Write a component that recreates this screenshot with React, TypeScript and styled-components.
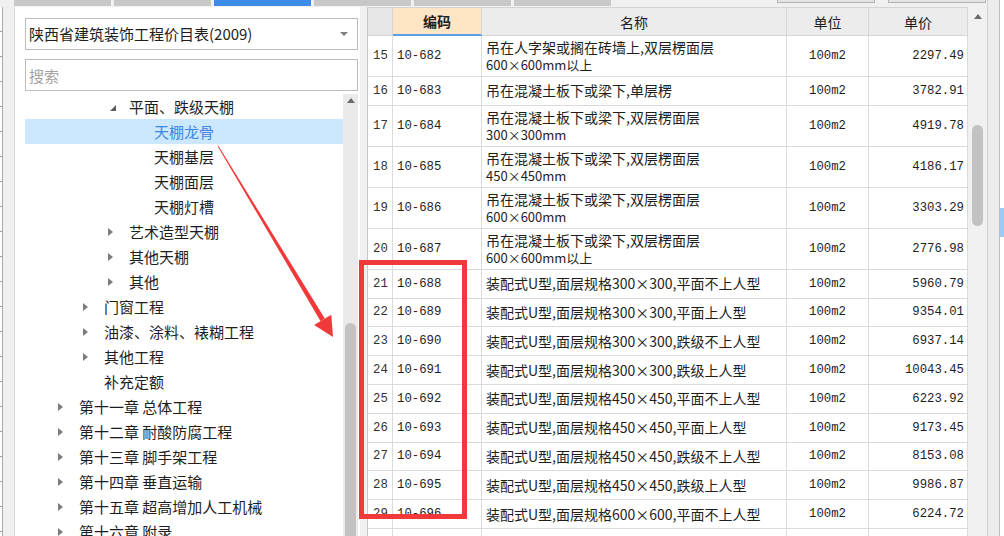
import React from "react";
import styled, { createGlobalStyle } from "styled-components";

const Global = createGlobalStyle`
  html, body { margin: 0; padding: 0; background: #f0f0f0; }
  body { font-family: "Noto Sans CJK SC", "Noto Sans", sans-serif; color: #1e1e1e; }
  * { box-sizing: border-box; }
`;

const Screen = styled.div`
  position: relative;
  width: 1004px;
  height: 536px;
  overflow: hidden;
  background: #f0f0f0;
  display: flex;
  flex-direction: column;
`;

const TopStrip = styled.div`
  flex: none;
  height: 7px;
  display: flex;
  align-items: flex-start;
`;

const Tabs = styled.div`
  display: flex;
  gap: 3px;
  margin-left: 14px;
`;

const Tab = styled.div<{ $active?: boolean }>`
  width: 97px;
  height: 6px;
  background: ${(p) => (p.$active ? "#3b8de8" : "#c8c8c8")};
`;

const ButtonStubs = styled.div`
  display: flex;
  gap: 13px;
  margin-left: 166px;
`;

const ButtonStub = styled.div`
  width: 98px;
  height: 3px;
  background: #e3e3e3;
  border: 1px solid #b2b2b2;
  border-top: none;
`;

const Main = styled.div`
  flex: 1;
  min-height: 0;
  display: flex;
  align-items: stretch;
`;

const LeftEdge = styled.div`
  width: 14px;
  flex: none;
  display: flex;
`;

const EdgeStrip = styled.div`
  width: 3px;
  background: repeating-linear-gradient(
    to bottom,
    #ffffff 0px,
    #ffffff 24px,
    #9a9a9a 24px,
    #9a9a9a 25px
  );
  border-right: 1px solid #a8a8a8;
`;

const Panel = styled.div`
  width: 346px;
  flex: none;
  background: #ffffff;
  border-left: 1px solid #d6d6d6;
  display: flex;
  flex-direction: column;
  padding: 11px 2px 0 10px;
`;

const Select = styled.div`
  height: 32px;
  flex: none;
  border: 1px solid #bcbcbc;
  display: flex;
  align-items: center;
  justify-content: space-between;
  padding: 0 9px 0 3px;
  font-size: 15px;
  line-height: 20px;
  color: #1e1e1e;
`;

const SelectArrow = styled.span`
  width: 0;
  height: 0;
  border-top: 4px solid #808080;
  border-left: 4px solid transparent;
  border-right: 4px solid transparent;
`;

const Search = styled.div`
  height: 32px;
  flex: none;
  margin-top: 9px;
  border: 1px solid #bcbcbc;
  display: flex;
  align-items: center;
  padding-left: 3px;
  font-size: 15px;
  color: #a3a3a3;
`;

const TreeWrap = styled.div`
  flex: 1;
  min-height: 0;
  margin-top: 3px;
  display: flex;
  overflow: hidden;
`;

const TreeList = styled.div`
  flex: 1;
  display: flex;
  flex-direction: column;
`;

const TreeRow = styled.div<{ $level: number; $selected?: boolean }>`
  height: 25px;
  flex: none;
  display: flex;
  align-items: center;
  padding-left: ${(p) => 33 + p.$level * 25}px;
  font-size: 15px;
  line-height: 25px;
  white-space: nowrap;
  background: ${(p) => (p.$selected ? "#cce8ff" : "transparent")};
  color: ${(p) => (p.$selected ? "#3a87df" : "#1e1e1e")};
`;

const CaretSlot = styled.span`
  width: 21px;
  flex: none;
  display: flex;
  align-items: center;
`;

const CaretClosed = styled.span`
  width: 0;
  height: 0;
  border-left: 5px solid #7c7c7c;
  border-top: 4px solid transparent;
  border-bottom: 4px solid transparent;
`;

const CaretOpen = styled.span`
  margin-left: 2px;
  margin-top: 2px;
  width: 0;
  height: 0;
  border-bottom: 6px solid #5a5a5a;
  border-left: 6px solid transparent;
`;

const VScroll = styled.div<{ $w: number; $bg: string }>`
  width: ${(p) => p.$w}px;
  flex: none;
  background: ${(p) => p.$bg};
  display: flex;
  flex-direction: column;
  align-items: center;
`;

const ScrollUp = styled.span<{ $top: number }>`
  margin-top: ${(p) => p.$top}px;
  flex: none;
  width: 0;
  height: 0;
  border-bottom: 5px solid #6a6a6a;
  border-left: 4px solid transparent;
  border-right: 4px solid transparent;
`;

const Thumb = styled.div<{ $top: number; $h: number }>`
  margin-top: ${(p) => p.$top}px;
  width: 11px;
  height: ${(p) => p.$h}px;
  border-radius: 6px;
  background: #c2c2c2;
  flex: none;
`;

const TableArea = styled.div`
  margin-left: 7px;
  display: flex;
  flex: none;
`;

const Grid = styled.div`
  width: 601px;
  border-left: 1px solid #c9c9c9;
  border-top: 1px solid #d4d4d4;
  display: flex;
  flex-direction: column;
`;

const cols = "25px 89px 305px 82px 99px";

const HeadRow = styled.div`
  display: grid;
  grid-template-columns: ${cols};
  height: 28px;
  flex: none;
`;

const HeadCell = styled.div<{ $active?: boolean; $corner?: boolean }>`
  display: flex;
  align-items: center;
  justify-content: center;
  font-size: 14px;
  color: #1e1e1e;
  font-weight: ${(p) => (p.$active ? 700 : 400)};
  background: ${(p) => (p.$active ? "#fde5c6" : p.$corner ? "#e6e6e6" : "#ececec")};
  border-right: 1px solid #d6d6d6;
  border-bottom: ${(p) => (p.$active ? "2px solid #5b9fe8" : "1px solid #d6d6d6")};
`;

const BodyRow = styled.div<{ $tall?: boolean }>`
  display: grid;
  grid-template-columns: ${cols};
  height: ${(p) => (p.$tall ? 41 : 28.8)}px;
  flex: none;
  background: #ffffff;
`;

const BaseCell = styled.div`
  display: flex;
  align-items: center;
  border-right: 1px solid #dadada;
  border-bottom: 1px solid #dadada;
  overflow: hidden;
  white-space: nowrap;
`;

const NumCell = styled(BaseCell)`
  padding-left: 5px;
  font-family: "Liberation Mono", "DejaVu Sans Mono", monospace;
  font-size: 12.3px;
  color: #333333;
`;

const CodeCell = styled(BaseCell)`
  padding-left: 4px;
  font-family: "Liberation Mono", "DejaVu Sans Mono", monospace;
  font-size: 12.3px;
  color: #1e1e1e;
`;

const NameCell = styled(BaseCell)`
  padding-left: 4px;
  flex-direction: column;
  align-items: flex-start;
  justify-content: center;
  font-size: 14px;
  line-height: 17px;
  color: #1e1e1e;
`;

const NameLine = styled.span<{ $sub?: boolean }>`
  display: block;
  height: 17px;
  font-size: ${(p) => (p.$sub ? 13 : 14)}px;
`;

const UnitCell = styled(BaseCell)`
  justify-content: center;
  font-family: "Liberation Mono", "DejaVu Sans Mono", monospace;
  font-size: 12.3px;
  color: #1e1e1e;
`;

const PriceCell = styled(BaseCell)`
  justify-content: flex-end;
  padding-right: 3px;
  font-family: "Liberation Mono", "DejaVu Sans Mono", monospace;
  font-size: 12.3px;
  color: #1e1e1e;
`;

const RightStrip = styled.div`
  flex: 1;
  display: flex;
  border-left: 1px solid #d2d2d2;
  margin-top: -7px;
`;

const RightGrey = styled.div`
  width: 12px;
  background: #ececec;
  border-right: 1px solid #bdbdbd;
`;

const RightPane = styled.div`
  flex: 1;
  background: #ffffff;
  display: flex;
  flex-direction: column;
`;

const RightBand = styled.div`
  margin-top: 208px;
  height: 29px;
  background: #9ec9f2;
`;

const Overlay = styled.svg`
  position: absolute;
  left: 0;
  top: 0;
  pointer-events: none;
`;

type TreeItem = { label: string; level: number; caret?: "open" | "closed"; selected?: boolean };

const tree: TreeItem[] = [
  { label: "平面、跌级天棚", level: 2, caret: "open" },
  { label: "天棚龙骨", level: 3, selected: true },
  { label: "天棚基层", level: 3 },
  { label: "天棚面层", level: 3 },
  { label: "天棚灯槽", level: 3 },
  { label: "艺术造型天棚", level: 2, caret: "closed" },
  { label: "其他天棚", level: 2, caret: "closed" },
  { label: "其他", level: 2, caret: "closed" },
  { label: "门窗工程", level: 1, caret: "closed" },
  { label: "油漆、涂料、裱糊工程", level: 1, caret: "closed" },
  { label: "其他工程", level: 1, caret: "closed" },
  { label: "补充定额", level: 1 },
  { label: "第十一章 总体工程", level: 0, caret: "closed" },
  { label: "第十二章 耐酸防腐工程", level: 0, caret: "closed" },
  { label: "第十三章 脚手架工程", level: 0, caret: "closed" },
  { label: "第十四章 垂直运输", level: 0, caret: "closed" },
  { label: "第十五章 超高增加人工机械", level: 0, caret: "closed" },
  { label: "第十六章 附录", level: 0, caret: "closed" },
];

type Row = { n: number; code: string; name: string[]; price: string };

const rows: Row[] = [
  { n: 15, code: "10-682", name: ["吊在人字架或搁在砖墙上,双层楞面层", "600×600mm以上"], price: "2297.49" },
  { n: 16, code: "10-683", name: ["吊在混凝土板下或梁下,单层楞"], price: "3782.91" },
  { n: 17, code: "10-684", name: ["吊在混凝土板下或梁下,双层楞面层", "300×300mm"], price: "4919.78" },
  { n: 18, code: "10-685", name: ["吊在混凝土板下或梁下,双层楞面层", "450×450mm"], price: "4186.17" },
  { n: 19, code: "10-686", name: ["吊在混凝土板下或梁下,双层楞面层", "600×600mm"], price: "3303.29" },
  { n: 20, code: "10-687", name: ["吊在混凝土板下或梁下,双层楞面层", "600×600mm以上"], price: "2776.98" },
  { n: 21, code: "10-688", name: ["装配式U型,面层规格300×300,平面不上人型"], price: "5960.79" },
  { n: 22, code: "10-689", name: ["装配式U型,面层规格300×300,平面上人型"], price: "9354.01" },
  { n: 23, code: "10-690", name: ["装配式U型,面层规格300×300,跌级不上人型"], price: "6937.14" },
  { n: 24, code: "10-691", name: ["装配式U型,面层规格300×300,跌级上人型"], price: "10043.45" },
  { n: 25, code: "10-692", name: ["装配式U型,面层规格450×450,平面不上人型"], price: "6223.92" },
  { n: 26, code: "10-693", name: ["装配式U型,面层规格450×450,平面上人型"], price: "9173.45" },
  { n: 27, code: "10-694", name: ["装配式U型,面层规格450×450,跌级不上人型"], price: "8153.08" },
  { n: 28, code: "10-695", name: ["装配式U型,面层规格450×450,跌级上人型"], price: "9986.87" },
  { n: 29, code: "10-696", name: ["装配式U型,面层规格600×600,平面不上人型"], price: "6224.72" },
  { n: 30, code: "10-697", name: ["装配式U型,面层规格600×600,平面上人型"], price: "" },
];

export default function App() {
  return (
    <Screen>
      <Global />
      <TopStrip>
        <Tabs>
          <Tab />
          <Tab />
          <Tab $active />
          <Tab />
          <Tab />
          <Tab />
        </Tabs>
        <ButtonStubs>
          <ButtonStub />
          <ButtonStub />
        </ButtonStubs>
      </TopStrip>
      <Main>
        <LeftEdge>
          <EdgeStrip />
        </LeftEdge>
        <Panel>
          <Select>
            <span>陕西省建筑装饰工程价目表(2009)</span>
            <SelectArrow />
          </Select>
          <Search>搜索</Search>
          <TreeWrap>
            <TreeList>
              {tree.map((t) => (
                <TreeRow key={t.label} $level={t.level} $selected={t.selected}>
                  <CaretSlot>
                    {t.caret === "closed" && <CaretClosed />}
                    {t.caret === "open" && <CaretOpen />}
                  </CaretSlot>
                  <span>{t.label}</span>
                </TreeRow>
              ))}
            </TreeList>
            <VScroll $w={15} $bg="#eaeaea">
              <ScrollUp $top={4} />
              <Thumb $top={220} $h={260} />
            </VScroll>
          </TreeWrap>
        </Panel>
        <TableArea>
          <Grid>
            <HeadRow>
              <HeadCell $corner />
              <HeadCell $active>编码</HeadCell>
              <HeadCell>名称</HeadCell>
              <HeadCell>单位</HeadCell>
              <HeadCell>单价</HeadCell>
            </HeadRow>
            {rows.map((r) => (
              <BodyRow key={r.n} $tall={r.name.length > 1}>
                <NumCell>{r.n}</NumCell>
                <CodeCell>{r.code}</CodeCell>
                <NameCell>
                  {r.name.map((l, i) => (
                    <NameLine key={l} $sub={i > 0}>
                      {l}
                    </NameLine>
                  ))}
                </NameCell>
                <UnitCell>100m2</UnitCell>
                <PriceCell>{r.price}</PriceCell>
              </BodyRow>
            ))}
          </Grid>
          <VScroll $w={19} $bg="#f0f0f0">
            <ScrollUp $top={7} />
            <Thumb $top={106} $h={101} />
          </VScroll>
        </TableArea>
        <RightStrip>
          <RightGrey />
          <RightPane>
            <RightBand />
          </RightPane>
        </RightStrip>
      </Main>
      <Overlay width={1004} height={536} viewBox="0 0 1004 536">
        <polygon
          points="217.6,146.3 218.4,145.7 324.8,318.6 320.6,321.2"
          fill="#f2393a"
        />
        <polygon points="333,337 314.1,325.1 331.3,314.7" fill="#f2393a" />
        <rect x={361.5} y={262.5} width={103} height={254} fill="none" stroke="#f2393a" strokeWidth={5} />
      </Overlay>
    </Screen>
  );
}
